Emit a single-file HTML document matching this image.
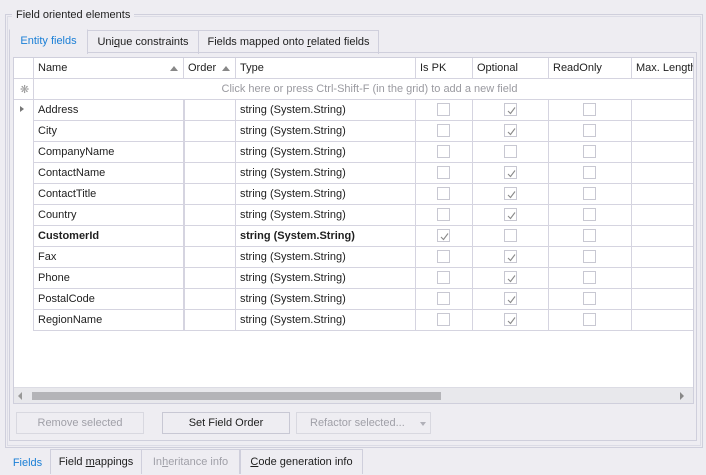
<!DOCTYPE html>
<html><head><meta charset="utf-8"><style>
*{box-sizing:border-box;margin:0;padding:0}
body{width:706px;height:475px;background:#eeedf2;font-family:"Liberation Sans",Tahoma,sans-serif;font-size:11px;color:#1e1e1e;position:relative;overflow:hidden}
.a{position:absolute}
.grp{left:5px;top:14px;width:698px;height:434px;border:1px solid #cfcfdc}
.grp2{left:7px;top:16px;width:694px;height:430px;border:1px solid #dcdce6}
.title{left:12px;top:9px;padding:0 4px;background:#eeedf2;font-size:11px}
.tabpage{left:9px;top:52px;width:688px;height:389px;border:1px solid #cfcfdc}
.tab{top:29px;height:24px;border:1px solid #cfcfdc;border-bottom:none;padding-top:5px;text-align:center;font-size:11px}
.grid{left:13px;top:57px;width:681px;height:347px;border:1px solid #cfcfdc;background:#fff;overflow:hidden}
.c{position:absolute;height:21px;border-right:1px solid #d5d4e0;border-bottom:1px solid #d5d4e0;padding:4px 0 0 4px;white-space:nowrap;overflow:hidden}
.cb{position:absolute;width:13px;height:13px;border:1px solid #c8c8d2;background:#fff}
.cb svg{position:absolute;left:1px;top:1px}
.sb{left:0;top:329px;width:679px;height:17px;background:#e8e8ec;border-top:1px solid #dcdce4}
.btn{top:412px;height:22px;border:1px solid #d8d8e0;text-align:center;padding-top:4px;font-size:11px;color:#a0a0a8}
.bt{top:449px;height:25px;border:1px solid #cfcfdc;border-bottom:none;padding-top:6px;text-align:center;font-size:11px}
</style></head><body>
<div class="a grp"></div><div class="a grp2"></div>
<div class="a title">Field oriented elements</div>
<div class="a tabpage"></div>
<div class="a tab" style="left:9px;width:79px;color:#1a7fd6;background:#eeedf2;border-color:#eeedf2 #cfcfdc;height:25px">Entity fields</div>
<div class="a tab" style="left:87px;width:112px;top:30px">Uni<u>q</u>ue constraints</div>
<div class="a tab" style="left:198px;width:181px;top:30px">Fields mapped onto <u>r</u>elated fields</div>
<div class="a grid">
<div class="c" style="left:0;top:0;width:20px"></div>
<div class="c" style="left:20px;top:0;width:150px">Name<span class="a" style="left:136px;top:8px;border:4px solid transparent;border-bottom:5px solid #888;border-top:none"></span></div>
<div class="c" style="left:170px;top:0;width:52px">Order<span class="a" style="left:38px;top:8px;border:4px solid transparent;border-bottom:5px solid #888;border-top:none"></span></div>
<div class="c" style="left:222px;top:0;width:180px">Type</div>
<div class="c" style="left:402px;top:0;width:57px">Is PK</div>
<div class="c" style="left:459px;top:0;width:76px">Optional</div>
<div class="c" style="left:535px;top:0;width:83px">ReadOnly</div>
<div class="c" style="left:618px;top:0;width:70px">Max. Length</div>
<div class="c" style="left:0;top:21px;width:20px;color:#999;padding-left:6px">&#x274B;</div>
<div class="c" style="left:20px;top:21px;width:668px;text-align:center;color:#9a9aa0">Click here or press Ctrl-Shift-F (in the grid) to add a new field</div>
<div id="rows"></div>
<div class="a" style="left:0;top:42px;width:20px;height:231px;border-right:1px solid #d5d4e0"></div>
<div class="a" style="left:169px;top:42px;width:2px;height:231px;background:#d5d4e0"></div>
<div class="a" style="left:6px;top:48px;border:3px solid transparent;border-left:4px solid #777;border-right:none"></div>
<div class="a sb"><span class="a" style="left:4px;top:4px;border:4px solid transparent;border-right:4px solid #999;border-left:none"></span><div class="a" style="left:18px;top:4px;width:409px;height:8px;background:#b4b4b8"></div><span class="a" style="left:666px;top:4px;border:4px solid transparent;border-left:4px solid #888;border-right:none"></span></div>
</div>
<div class="a btn" style="left:16px;width:128px">Remove selected</div>
<div class="a btn" style="left:162px;width:128px;color:#1e1e1e;border-color:#c8c8d4">Set Field Order</div>
<div class="a btn" style="left:296px;width:135px;text-align:left;padding-left:13px">Refactor selected...<span class="a" style="left:123px;top:9px;border:3px solid transparent;border-top:4px solid #b0b0b8;border-bottom:none"></span></div>
<div class="a bt" style="left:4px;width:47px;color:#1a7fd6;border-color:transparent;top:450px">Fields</div>
<div class="a bt" style="left:50px;width:92px">Field <u>m</u>appings</div>
<div class="a bt" style="left:141px;width:99px;color:#a0a0a8">In<u>h</u>eritance info</div>
<div class="a bt" style="left:240px;width:123px"><u>C</u>ode generation info</div>
<script>
var r=[["Address",0,1],["City",0,1],["CompanyName",0,0],["ContactName",0,1],["ContactTitle",0,1],["Country",0,1],["CustomerId",1,0],["Fax",0,1],["Phone",0,1],["PostalCode",0,1],["RegionName",0,1]];
var ck='<svg width="11" height="11"><path d="M2 6 L4.5 8.5 L9 2.5" stroke="#8a8a8a" stroke-width="1.1" fill="none"/></svg>';
var h='';
r.forEach(function(x,i){var t=42+i*21,b=x[1]?'font-weight:bold;':'';
h+='<div class="c" style="left:20px;top:'+t+'px;width:150px;'+b+'">'+x[0]+'</div>';
h+='<div class="c" style="left:170px;top:'+t+'px;width:52px"></div>';
h+='<div class="c" style="left:222px;top:'+t+'px;width:180px;'+b+'">string (System.String)</div>';
h+='<div class="c" style="left:402px;top:'+t+'px;width:57px"><div class="cb" style="left:21px;top:3px">'+(x[1]?ck:'')+'</div></div>';
h+='<div class="c" style="left:459px;top:'+t+'px;width:76px"><div class="cb" style="left:31px;top:3px">'+(x[2]?ck:'')+'</div></div>';
h+='<div class="c" style="left:535px;top:'+t+'px;width:83px"><div class="cb" style="left:34px;top:3px"></div></div>';
h+='<div class="c" style="left:618px;top:'+t+'px;width:70px"></div>';});
document.getElementById('rows').innerHTML=h;
</script>
</body></html>
